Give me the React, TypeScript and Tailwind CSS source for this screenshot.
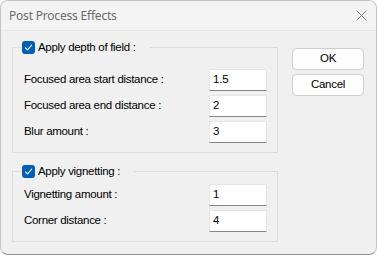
import React from 'react';

const font = { fontFamily: '"Liberation Sans", Arial, sans-serif' };

const CheckBox: React.FC = () => (
  <span className="inline-flex h-[13px] w-[13px] items-center justify-center rounded-[3px] bg-[#005fb8]">
    <svg width="9" height="9" viewBox="0 0 9 9" fill="none">
      <path d="M1.5 4.8 L3.6 6.8 L7.6 2.2" stroke="white" strokeWidth="1.1" strokeLinecap="round" strokeLinejoin="round" />
    </svg>
  </span>
);

const Field: React.FC<{ label: string; value: string }> = ({ label, value }) => (
  <div className="flex h-[22px] items-center justify-between">
    <span className="text-[11.5px] leading-none tracking-[-0.3px] text-black">{label}</span>
    <div className="flex h-[22px] w-[58px] items-center border border-[#e6e6e6] border-b-[#868686] bg-white pl-[3px] text-[11.5px] leading-none tracking-[-0.2px] text-black">
      {value}
    </div>
  </div>
);

const Group: React.FC<{ title: string; fields: { label: string; value: string }[]; top: string; className?: string }> = ({
  title,
  fields,
  top,
  className,
}) => (
  <fieldset className={`border border-[#dcdcdc] pl-[11px] pr-[10px] pb-[9px] ${className ?? ''}`}>
    <legend className="ml-[-3px] flex h-[13px] items-center gap-[3px] pl-[1px] pr-[14px] text-[11.5px] leading-none tracking-[-0.3px] text-black">
      <CheckBox />
      <span>{title}</span>
    </legend>
    <div className={`flex flex-col gap-[4px] ${top}`}>
      {fields.map((f) => (
        <Field key={f.label} label={f.label} value={f.value} />
      ))}
    </div>
  </fieldset>
);

const Button: React.FC<{ label: string }> = ({ label }) => (
  <button className="flex h-[22px] w-[72px] items-center justify-center rounded-[4px] border border-[#d0d0d0] bg-[#fdfdfd] text-[11.5px] leading-none tracking-[-0.3px] text-black">
    {label}
  </button>
);

export default function App() {
  return (
    <div className="h-[255px] w-[377px] overflow-hidden bg-white" style={font}>
      <div className="flex h-[255px] w-[377px] flex-col overflow-hidden rounded-[8px] border border-[#c4c4c4] border-b-[#8f8f8f] bg-[#f0f0f0]">
        <div className="flex h-[30px] items-center justify-between border-b border-[#e8e8e8] bg-[#f3f3f3] pl-[8px] pr-[9px]">
          <span className="text-[12px] tracking-[-0.2px] text-[#6b6b6b]" style={{ fontFamily: '"Noto Sans", "Open Sans", sans-serif' }}>
            Post Process Effects
          </span>
          <svg width="11" height="11" viewBox="0 0 11 11">
            <path d="M0.5 0.5 L10.5 10.5 M10.5 0.5 L0.5 10.5" stroke="#808080" strokeWidth="1" />
          </svg>
        </div>
        <div className="flex pl-[11px] pt-[10px]">
          <div className="flex w-[266px] flex-col">
            <Group
              title="Apply depth of field :"
              top="mt-[15px]"
              fields={[
                { label: 'Focused area start distance :', value: '1.5' },
                { label: 'Focused area end distance :', value: '2' },
                { label: 'Blur amount :', value: '3' },
              ]}
            />
            <Group
              title="Apply vignetting :"
              top="mt-[6px]"
              className="mt-[12px]"
              fields={[
                { label: 'Vignetting amount :', value: '1' },
                { label: 'Corner distance :', value: '4' },
              ]}
            />
          </div>
          <div className="ml-[14px] mt-[7px] flex flex-col gap-[4px]">
            <Button label="OK" />
            <Button label="Cancel" />
          </div>
        </div>
      </div>
    </div>
  );
}
